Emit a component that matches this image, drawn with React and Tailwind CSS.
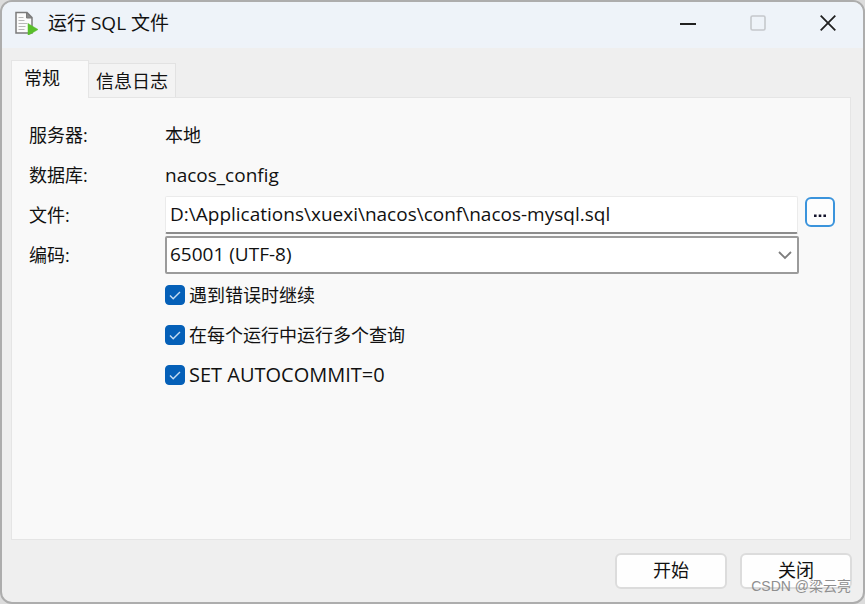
import React, { useState } from 'react'

function ScriptIcon() {
  return (
    <svg className="w-6 h-6" viewBox="0 0 24 24" fill="none">
      <path d="M2 1.5h11l5 5V22H2z" fill="#fbfbfb" stroke="#7b7b7b" strokeWidth="1.5" />
      <path d="M12.5 1.5v5.5H18z" fill="#8a8a8a" stroke="#7b7b7b" />
      <path d="M4.5 6.5h5M4.5 9.5h6M4.5 12.5h9M4.5 15.5h7M4.5 18.5h6" stroke="#b8b8b8" strokeWidth="1.2" />
      <path d="M14 12.5v12l10-6z" fill="#58bf2b" stroke="#58bf2b" strokeWidth="0.5" />
    </svg>
  )
}

function TitleBar() {
  return (
    <header className="flex items-center justify-between h-[46px] pl-3 pr-[27px] pb-1 bg-[#eef3f9]">
      <div className="flex items-center gap-2.5">
        <ScriptIcon />
        <h1 className="text-[19px] leading-6">运行 SQL 文件</h1>
      </div>
      <div className="flex items-center gap-[54px] text-[#202020]">
        <button type="button" aria-label="最小化">
          <svg className="w-4 h-4" viewBox="0 0 16 16"><path d="M0 9h16" stroke="currentColor" strokeWidth="2" /></svg>
        </button>
        <button type="button" aria-label="最大化" disabled className="text-[#c5c8cc]">
          <svg className="w-4 h-4" viewBox="0 0 16 16" fill="none"><rect x="1" y="1" width="14" height="14" rx="1.5" stroke="currentColor" strokeWidth="1.6" /></svg>
        </button>
        <button type="button" aria-label="关闭窗口">
          <svg className="w-4 h-4" viewBox="0 0 16 16"><path d="M.7.7l14.6 14.6M15.3.7L.7 15.3" stroke="currentColor" strokeWidth="1.8" /></svg>
        </button>
      </div>
    </header>
  )
}

function CheckRow({ label, className = '' }) {
  const [checked, setChecked] = useState(true)
  return (
    <label className={`flex items-center gap-1 h-10 ${className}`}>
      <span className="grid w-5 h-5">
        <input
          type="checkbox"
          checked={checked}
          onChange={(e) => setChecked(e.target.checked)}
          className="peer appearance-none col-start-1 row-start-1 w-5 h-5 rounded border border-[#8a8a8a] bg-white checked:border-[#0560b8] checked:bg-[#0560b8]"
        />
        <svg className="invisible peer-checked:visible pointer-events-none col-start-1 row-start-1 w-5 h-5" viewBox="0 0 20 20" fill="none">
          <path d="M5 10.5l3.2 3.2L15 7" stroke="#c5dcf2" strokeWidth="1.4" />
        </svg>
      </span>
      {label}
    </label>
  )
}

export default function App() {
  return (
    <div className="min-h-screen flex bg-[#dcdcdc] text-[18px] leading-6 text-[#111] font-['Open_Sans','Noto_Sans_CJK_SC',sans-serif]">
      <div className="flex-1 flex flex-col rounded-xl overflow-hidden border-2 border-[#adadad] bg-[#efefef]">
        <TitleBar />

        <main className="flex-1 flex flex-col px-[9px] pt-3">
          <div role="tablist" className="flex items-end">
            <button type="button" role="tab" aria-selected="true" className="z-10 h-[38px] -mb-px pl-3 pr-7 pb-1 border border-b-0 border-[#e5e5e5] bg-[#f9f9f9]">常规</button>
            <button type="button" role="tab" aria-selected="false" className="h-[34px] px-[7px] border border-l-0 border-b-0 border-[#e2e2e2] bg-[#f3f3f3]">信息日志</button>
          </div>

          <section role="tabpanel" className="flex-1 mr-[3px] pl-[17px] pr-[15px] pt-[17px] border border-[#e5e5e5] bg-[#f9f9f9]">
            <div className="grid grid-cols-[136px_1fr] auto-rows-[40px] items-center">
              <span>服务器:</span>
              <span>本地</span>

              <span>数据库:</span>
              <span className="text-[19px]">nacos_config</span>

              <label htmlFor="file">文件:</label>
              <div className="flex items-center gap-[7px]">
                <input
                  id="file"
                  defaultValue="D:\Applications\xuexi\nacos\conf\nacos-mysql.sql"
                  className="flex-1 min-w-0 h-[38px] px-1 pb-0.5 rounded-xs border border-[#ebebeb] border-b-2 border-b-[#8c8c8c] bg-white text-[19px] outline-none"
                />
                <button type="button" aria-label="浏览" className="flex items-center justify-center w-[30px] h-[30px] mb-1.5 rounded-md border-2 border-[#3b94dc] bg-[#fdfdfd]">
                  <svg className="w-4 h-4" viewBox="0 0 16 16" fill="#14142c"><path d="M2 10.5h2.6v2.6H2zM6.7 10.5h2.6v2.6H6.7zM11.4 10.5H14v2.6h-2.6z" /></svg>
                </button>
              </div>

              <label htmlFor="encoding">编码:</label>
              <div className="grid items-center mr-9">
                <select id="encoding" className="appearance-none col-start-1 row-start-1 w-full h-[38px] px-[3px] pb-0.5 rounded-xs border-2 border-[#9b9b9b] bg-white text-[19px] outline-none">
                  <option>65001 (UTF-8)</option>
                </select>
                <svg className="pointer-events-none col-start-1 row-start-1 justify-self-end w-4 h-4 mr-1.5" viewBox="0 0 16 16" fill="none">
                  <path d="M2 5l6 6 6-6" stroke="#7d7d7d" strokeWidth="1.8" />
                </svg>
              </div>
            </div>

            <div className="flex flex-col items-start pl-[136px]">
              <CheckRow label="遇到错误时继续" />
              <CheckRow label="在每个运行中运行多个查询" />
              <CheckRow label="SET AUTOCOMMIT=0" className="text-[20px]" />
            </div>
          </section>
        </main>

        <footer className="relative flex justify-end gap-[13px] py-[13px] pr-[11px]">
          <button type="button" className="w-28 h-9 rounded-md border-2 border-[#dcdcdc] bg-[#fefefe] pb-0.5">开始</button>
          <button type="button" className="w-28 h-9 rounded-md border-2 border-[#dcdcdc] bg-[#fefefe] pb-0.5">关闭</button>
          <span className="absolute right-3 bottom-1.5 text-[14px] leading-5 text-[#8f8f8f] pointer-events-none font-['Liberation_Sans','Noto_Sans_CJK_SC',sans-serif]">CSDN @梁云亮</span>
        </footer>
      </div>
    </div>
  )
}
